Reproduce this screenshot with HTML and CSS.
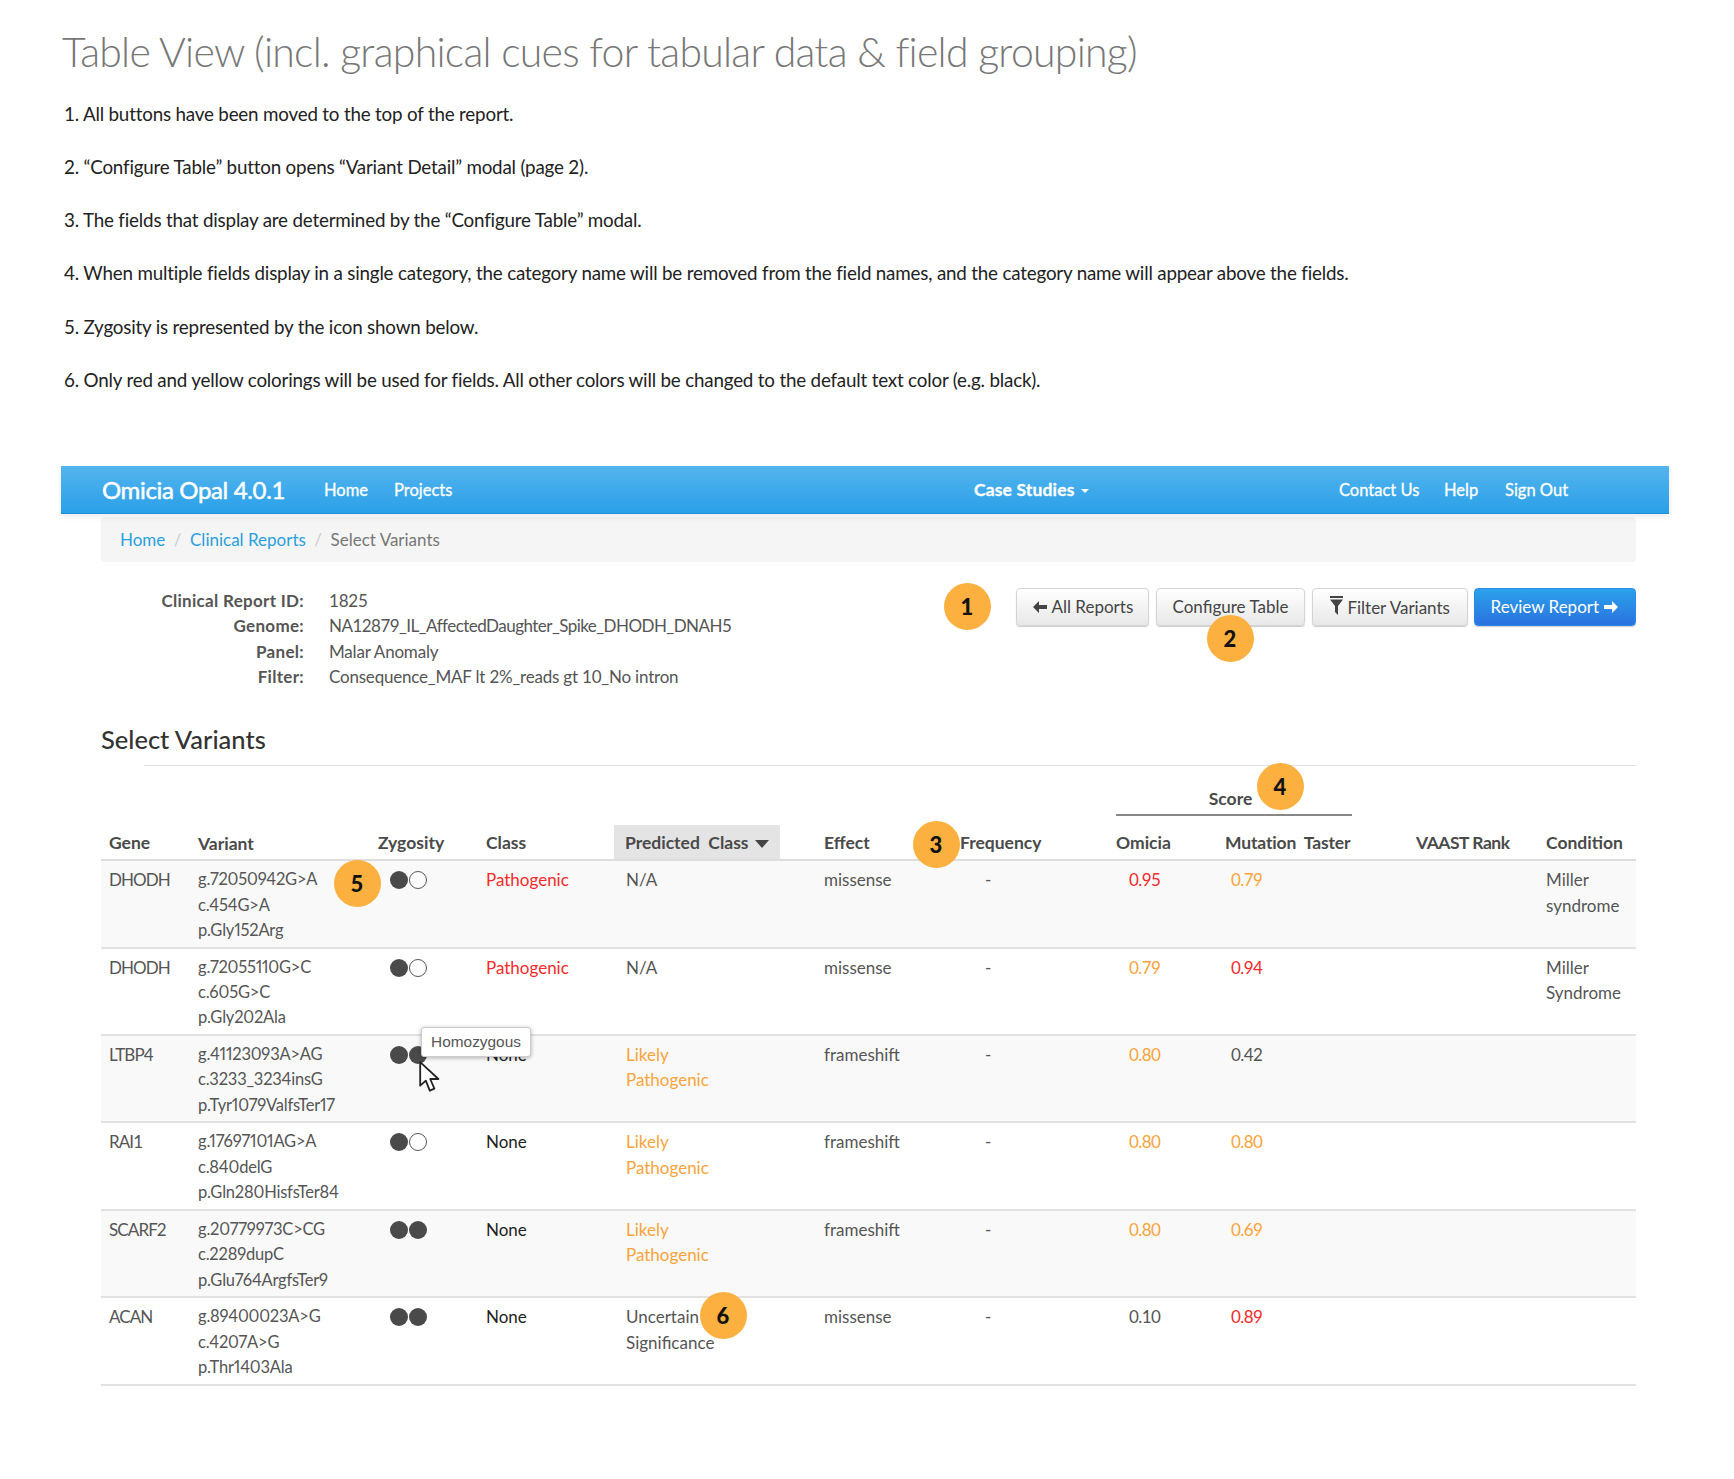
FILE: index.html
```html
<!DOCTYPE html>
<html lang="en">
<head>
<meta charset="utf-8">
<title>Table View</title>
<link rel="stylesheet" href="styles.css">
</head>
<body>
<div class="page">
  <header class="spec">
    <h1>Table View (incl. graphical cues for tabular data &amp; field grouping)</h1>
    <p>1. All buttons have been moved to the top of the report.</p>
    <p>2. “Configure Table” button opens “Variant Detail” modal (page 2).</p>
    <p>3. The fields that display are determined by the “Configure Table” modal.</p>
    <p>4. When multiple fields display in a single category, the category name will be removed from the field names, and the category name will appear above the fields.</p>
    <p>5. Zygosity is represented by the icon shown below.</p>
    <p>6. Only red and yellow colorings will be used for fields. All other colors will be changed to the default text color (e.g. black).</p>
  </header>

  <section class="app">
    <nav class="navbar">
      <a class="brand">Omicia Opal 4.0.1</a>
      <a class="link nav-home">Home</a>
      <a class="link nav-projects">Projects</a>
      <a class="nav-case">Case Studies<i class="caret"></i></a>
      <a class="link nav-contact">Contact Us</a>
      <a class="link nav-help">Help</a>
      <a class="link nav-signout">Sign Out</a>
    </nav>
    <main class="content">
      <ol class="breadcrumb">
        <li><a>Home</a></li><li class="sep">/</li><li><a>Clinical Reports</a></li><li class="sep">/</li><li class="active">Select Variants</li>
      </ol>
      <div class="report">
        <dl class="info">
          <dt>Clinical Report ID:</dt><dd>1825</dd>
          <dt>Genome:</dt><dd class="genome">NA12879_IL_AffectedDaughter_Spike_DHODH_DNAH5</dd>
          <dt>Panel:</dt><dd>Malar Anomaly</dd>
          <dt>Filter:</dt><dd>Consequence_MAF lt 2%_reads gt 10_No intron</dd>
        </dl>
        <div class="actions">
          <button class="btn btn-all"><svg class="ico" viewBox="0 0 16 14"><path d="M7 1 1 7l6 6V9h8V5H7z"/></svg> All Reports</button>
          <button class="btn btn-config">Configure Table</button>
          <button class="btn btn-filter"><svg class="ico ico-filter" viewBox="0 0 13 20"><path d="M0 0h13v2H0zM0 3.500h13L8 10v9l-3-3v-6z"/></svg> Filter Variants</button>
          <button class="btn btn-review">Review Report <svg class="ico" viewBox="0 0 16 14"><path d="M9 1l6 6-6 6V9H1V5h8z"/></svg></button>
        </div>
      </div>
      <h2>Select Variants</h2>
      <table class="variants">
        <colgroup>
          <col class="c-gene"><col class="c-variant"><col class="c-zyg"><col class="c-class"><col class="c-pred"><col class="c-effect"><col class="c-freq"><col class="c-omicia"><col class="c-mut"><col class="c-vaast"><col class="c-cond">
        </colgroup>
        <thead>
          <tr class="group">
            <th colspan="7"></th>
            <th colspan="2"><div class="score">Score</div></th>
            <th colspan="2"></th>
          </tr>
          <tr class="cols">
            <th>Gene</th><th class="th-variant">Variant</th><th>Zygosity</th><th>Class</th>
            <th class="sorted">Predicted&nbsp; Class<i class="sort"></i></th>
            <th class="effect">Effect</th><th>Frequency</th><th>Omicia</th><th class="th-mut">Mutation&nbsp; Taster</th><th class="th-vaast">VAAST Rank</th><th>Condition</th>
          </tr>
        </thead>
        <tbody>
          <tr>
            <td class="gene">DHODH</td><td class="var">g.72050942G&gt;A<br>c.454G&gt;A<br>p.Gly152Arg</td>
            <td class="zyg"><i class="dot"></i><i class="dot open"></i></td>
            <td class="red">Pathogenic</td><td class="pred">N/A</td><td class="effect">missense</td><td class="dash">-</td>
            <td class="om red">0.95</td><td class="mu amber">0.79</td><td></td><td>Miller<br>syndrome</td>
          </tr>
          <tr>
            <td class="gene">DHODH</td><td class="var">g.72055110G&gt;C<br>c.605G&gt;C<br>p.Gly202Ala</td>
            <td class="zyg"><i class="dot"></i><i class="dot open"></i></td>
            <td class="red">Pathogenic</td><td class="pred">N/A</td><td class="effect">missense</td><td class="dash">-</td>
            <td class="om amber">0.79</td><td class="mu red">0.94</td><td></td><td>Miller<br>Syndrome</td>
          </tr>
          <tr>
            <td class="gene">LTBP4</td><td class="var">g.41123093A&gt;AG<br>c.3233_3234insG<br>p.Tyr1079ValfsTer17</td>
            <td class="zyg"><i class="dot"></i><i class="dot"></i></td>
            <td class="none">None</td><td class="pred amber">Likely<br>Pathogenic</td><td class="effect">frameshift</td><td class="dash">-</td>
            <td class="om amber">0.80</td><td class="mu">0.42</td><td></td><td></td>
          </tr>
          <tr>
            <td class="gene">RAI1</td><td class="var">g.17697101AG&gt;A<br>c.840delG<br>p.Gln280HisfsTer84</td>
            <td class="zyg"><i class="dot"></i><i class="dot open"></i></td>
            <td class="none">None</td><td class="pred amber">Likely<br>Pathogenic</td><td class="effect">frameshift</td><td class="dash">-</td>
            <td class="om amber">0.80</td><td class="mu amber">0.80</td><td></td><td></td>
          </tr>
          <tr>
            <td class="gene">SCARF2</td><td class="var">g.20779973C&gt;CG<br>c.2289dupC<br>p.Glu764ArgfsTer9</td>
            <td class="zyg"><i class="dot"></i><i class="dot"></i></td>
            <td class="none">None</td><td class="pred amber">Likely<br>Pathogenic</td><td class="effect">frameshift</td><td class="dash">-</td>
            <td class="om amber">0.80</td><td class="mu amber">0.69</td><td></td><td></td>
          </tr>
          <tr>
            <td class="gene">ACAN</td><td class="var">g.89400023A&gt;G<br>c.4207A&gt;G<br>p.Thr1403Ala</td>
            <td class="zyg"><i class="dot"></i><i class="dot"></i></td>
            <td class="none">None</td><td class="pred">Uncertain<br>Significance</td><td class="effect">missense</td><td class="dash">-</td>
            <td class="om">0.10</td><td class="mu red">0.89</td><td></td><td></td>
          </tr>
        </tbody>
      </table>
    </main>
  </section>

  <span class="badge b1">1</span>
  <span class="badge b2">2</span>
  <span class="badge b3">3</span>
  <span class="badge b4">4</span>
  <span class="badge b5">5</span>
  <span class="badge b6">6</span>
  <div class="tooltip">Homozygous</div>
  <svg class="cursor" viewBox="0 0 22 31"><path d="M1.200 1.200v23.500l5.600-5 4 10 4.600-2-4.200-9.700h8.200z" fill="#fff" stroke="#222" stroke-width="1.800" stroke-linejoin="round"/></svg>
</div>
</body>
</html>
```
FILE: styles.css
```css
* { box-sizing: border-box; }
html, body { margin: 0; padding: 0; background: #fff; }
.page { position: relative; width: 1734px; height: 1479px; overflow: hidden; }

.spec { padding: 26px 0 0 62px; font-family: Lato, sans-serif; }
.spec h1 { margin: 0 0 22.600px; font-size: 41px; line-height: 52px; font-weight: 300; letter-spacing: -.75px; color: #777; }
.spec p { margin: 0 0 0 2px; height: 53.300px; font-size: 18.800px; line-height: 26px; letter-spacing: -.19px; color: #222; }

.app { margin: 45.400px 0 0 61px; width: 1608px; font-family: Lato, sans-serif; font-size: 17px; color: #555; }
.navbar { position: relative; z-index: 1; display: flex; align-items: center; height: 48px; padding-left: 41px; background: linear-gradient(#54b4ee, #2aa0e8); border-bottom: 1px solid #1f8fd6; box-shadow: 0 3px 6px rgba(0,0,0,.08); color: #fff; font-size: 16.500px; -webkit-text-stroke: .3px #fff; }
.link { margin-top: 2px; }
.brand { width: 222px; font-size: 24px; letter-spacing: -.35px; -webkit-text-stroke: .5px #fff; }
.nav-home { width: 70px; }
.nav-projects { width: 580px; }
.nav-case { width: 365px; font-size: 17.500px; font-weight: 700; letter-spacing: .15px; }
.nav-contact { width: 105px; }
.nav-help { width: 61px; }
.caret { display: inline-block; margin-left: 6px; vertical-align: 3px; border: 4px solid transparent; border-top-color: #fff; border-bottom: 0; }

.content { margin: 0 33px 0 40px; }
.breadcrumb { display: flex; margin: 3px 0 0; padding: 0 0 0 19px; height: 45px; align-items: center; list-style: none; background: #f5f5f5; border-radius: 4px; }
.breadcrumb a { color: #2a9fe0; }
.sep { margin: 0 8.500px; color: #ccc; }
.active { color: #777; }

.report { display: flex; justify-content: space-between; margin-top: 25px; }
.info { display: grid; grid-template-columns: 203px auto; column-gap: 25px; margin: 0; padding-top: 1px; line-height: 25.400px; }
.info dt { text-align: right; font-weight: 700; letter-spacing: .3px; }
.info dd { margin: 0; letter-spacing: -.2px; }
.info .genome { letter-spacing: -.53px; }
.actions { display: flex; gap: 7px; margin-top: 1px; }
.btn { height: 38px; padding: 0; font: inherit; color: #444; background: linear-gradient(#fff, #e8e8e8); border: 1px solid #d4d4d4; border-radius: 4px; box-shadow: 0 1px 1px rgba(0,0,0,.2); white-space: nowrap; }
.btn-all { width: 133px; }
.btn-config { width: 149px; }
.btn-filter { width: 156px; }
.btn-review { width: 162px; margin-left: -1px; color: #fff; background: linear-gradient(#2ba2ea, #2a72e0); border-color: #2a8ae4; }
.ico { width: 16px; height: 14px; fill: currentColor; vertical-align: -1px; }
.ico-filter { width: 13px; height: 20px; vertical-align: -2px; }

h2 { margin: 32px 0 0; font-size: 25.500px; line-height: 36px; font-weight: 500; color: #333; }

.variants { width: 1535px; table-layout: fixed; border-collapse: collapse; margin-top: 8px; }
.c-gene { width: 89px; } .c-variant { width: 180px; } .c-zyg { width: 108px; } .c-class { width: 136px; } .c-pred { width: 166px; } .c-effect { width: 172px; } .c-freq { width: 156px; } .c-omicia { width: 109px; } .c-mut { width: 191px; } .c-vaast { width: 130px; } .c-cond { width: 98px; }
.variants th { padding: 0 8px; text-align: left; font-size: 17.500px; font-weight: 700; color: #4a4a4a; white-space: nowrap; }
.group { height: 60px; }
.variants .group th { vertical-align: bottom; padding: 0; }
.group th:first-child { background: linear-gradient(#e2e2e2, #e2e2e2) right top / 964px 1px no-repeat; }
.group th:nth-child(2) { background: linear-gradient(#e2e2e2, #e2e2e2) top / 100% 1px no-repeat; }
.group th:last-child { background: linear-gradient(#e2e2e2, #e2e2e2) top / 100% 1px no-repeat; }
.score { margin: 0 56px 9px 8px; padding: 0 7px 5px 0; text-align: center; border-bottom: 2px solid #888; }
.cols { height: 35px; border-bottom: 2px solid #ddd; }
.variants .sorted { padding-left: 11px; background: #e4e4e4; }
.variants .effect { padding-left: 44px; }
.th-variant { position: relative; top: 1px; }
.variants .th-mut { letter-spacing: -.15px; }
.variants .th-vaast { letter-spacing: -.5px; }
.sort { display: inline-block; margin-left: 6px; vertical-align: 1px; border: 7px solid transparent; border-top: 8px solid #444; border-bottom: 0; }
tbody tr { height: 87.400px; border-bottom: 2px solid #e2e2e2; }
tbody tr:first-child { height: 87px; }
tbody tr:nth-child(odd) { background: #f9f9f9; }
td { padding: 6px 8px 3px; vertical-align: top; line-height: 25.400px; }
.gene { letter-spacing: -.9px; }
.var { font-size: 16.500px; letter-spacing: -.2px; font-feature-settings: "pnum"; }
.variants .pred { padding-left: 12px; }
.dash { padding-left: 33px; }
.variants .om { padding-left: 21px; letter-spacing: -.6px; }
.variants .mu { padding-left: 14px; letter-spacing: -.6px; }
.red { color: #f42a2a; }
.amber { color: #f9a43a; }
.none { color: #222; }
.variants .zyg { padding-left: 20px; padding-top: 10px; line-height: 0; white-space: nowrap; font-size: 0; }
.dot { display: inline-block; width: 18px; height: 18px; margin-right: 1px; border-radius: 50%; background: #4a4a4a; }
.dot.open { background: #fff; border: 1.500px solid #555; }

.badge { position: absolute; width: 47px; height: 47px; margin: -23.500px 0 0 -23.500px; border-radius: 50%; background: #fbb040; color: #111; font-family: Lato, sans-serif; font-weight: 900; font-size: 22px; line-height: 47px; text-align: center; }
.b1 { left: 967px; top: 606px; }
.b2 { left: 1230px; top: 638px; }
.b3 { left: 936px; top: 844px; }
.b4 { left: 1280px; top: 786px; }
.b5 { left: 357px; top: 883px; }
.b6 { left: 723px; top: 1315px; }
.tooltip { position: absolute; left: 421px; top: 1027px; width: 110px; height: 30px; background: #fff; border: 1px solid #ccc; border-radius: 3px; box-shadow: 0 1px 4px rgba(0,0,0,.3); font: 15.400px/27px "Liberation Sans", Arial, sans-serif; color: #555; text-align: center; }
.cursor { position: absolute; left: 419px; top: 1061px; width: 22px; height: 31px; }
```
